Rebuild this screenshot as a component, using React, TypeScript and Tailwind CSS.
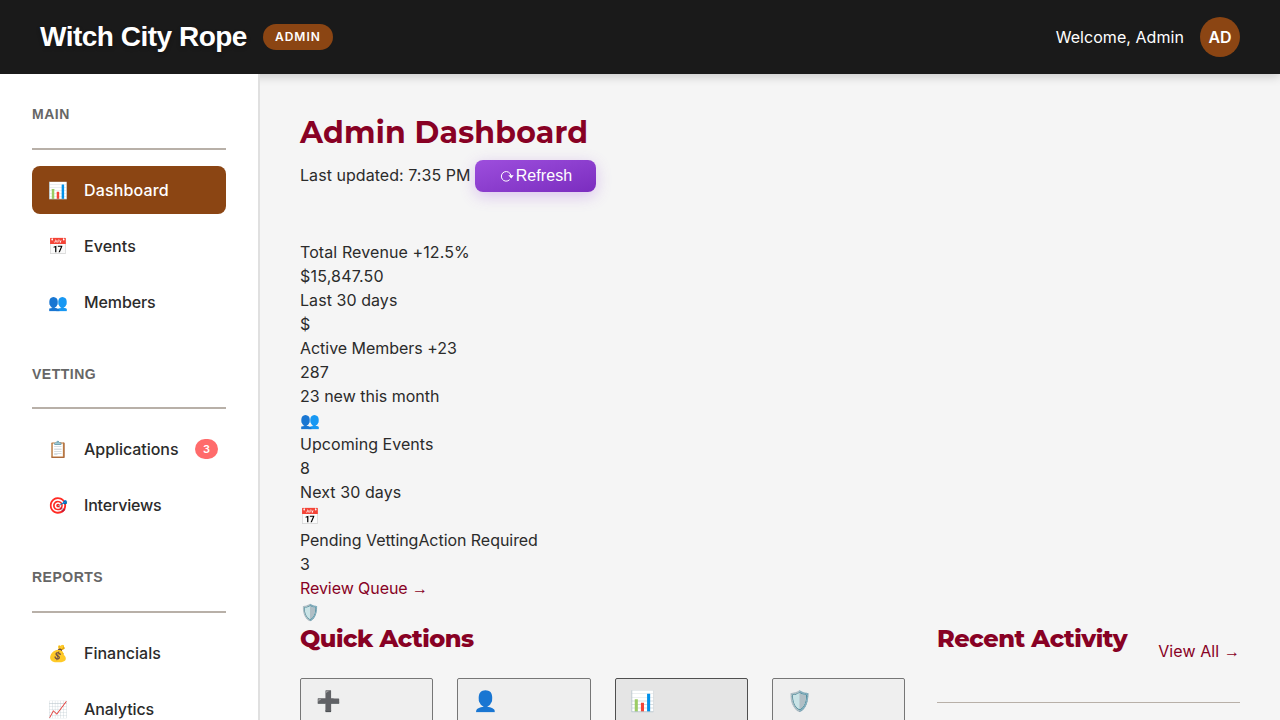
import type { ReactNode } from "react";

function Item({ icon, label, tracking = "", active, badge }: { icon: string; label: string; tracking?: string; active?: boolean; badge?: string }) {
  return (
    <a className={`mb-2 flex h-12 items-center rounded-lg pl-4 pr-2 text-[16px] font-medium ${active ? "bg-[#8b4513] text-white" : "text-[#2b2b2b]"}`}>
      <span className="w-9 shrink-0 text-[16px] leading-6">{icon}</span>
      <span className={tracking}>{label}</span>
      {badge && <span className="ml-auto flex h-5 w-[23px] items-center justify-center rounded-full bg-[#ff6b6b] text-[11px] font-semibold text-white">{badge}</span>}
    </a>
  );
}

function Section({ title, children }: { title: string; children: ReactNode }) {
  return (
    <section className="mb-10">
      <h3 className="mb-4 h-[43.6px] border-b-2 border-[#b8b0a8] font-['Liberation_Sans',sans-serif] text-[14px] font-bold leading-[17px] tracking-[0.5px] text-[#666]">{title}</h3>
      {children}
    </section>
  );
}

const Arrow = () => <span className="font-['Liberation_Sans',sans-serif] leading-none">→</span>;

const stats: { text: string; tracking?: string }[] = [
  { text: "Total Revenue +12.5%", tracking: "tracking-[0.1px]" },
  { text: "$15,847.50", tracking: "tracking-[0.2px]" },
  { text: "Last 30 days", tracking: "tracking-[0.06px]" },
  { text: "$" },
  { text: "Active Members +23", tracking: "tracking-[-0.03px]" },
  { text: "287" },
  { text: "23 new this month" },
  { text: "👥" },
  { text: "Upcoming Events", tracking: "tracking-[0.05px]" },
  { text: "8" },
  { text: "Next 30 days", tracking: "tracking-[0.08px]" },
  { text: "📅" },
  { text: "Pending VettingAction Required", tracking: "tracking-[-0.05px]" },
  { text: "3" },
];

const actions = ["➕", "👤", "📊", "🛡️"];

export default function App() {
  return (
    <div className="flex h-[720px] w-[1280px] flex-col overflow-hidden bg-[#f5f5f5] font-['Inter','Noto_Color_Emoji',sans-serif] text-[16px] leading-6 text-[#2b2b2b]">
      <header className="relative z-10 flex h-[74px] shrink-0 items-center justify-between bg-[#1a1a1a] px-10 text-white shadow-[0_2px_10px_rgba(0,0,0,0.2)]">
        <div className="flex items-center gap-4">
          <h1 className="font-['Liberation_Sans',sans-serif] text-[28px] font-bold tracking-[-0.5px] [text-shadow:0_2px_4px_rgba(0,0,0,0.3)]">Witch City Rope</h1>
          <span className="flex h-[26px] w-[70px] items-center justify-center rounded-full bg-[#8b4513] text-[12px] font-semibold tracking-[1px]">ADMIN</span>
        </div>
        <div className="flex items-center gap-4">
          <span className="tracking-[0.06px]">Welcome, Admin</span>
          <span className="flex h-10 w-10 items-center justify-center rounded-full bg-[#8b4513] font-semibold">AD</span>
        </div>
      </header>
      <div className="flex min-h-0 flex-1">
        <aside className="relative z-20 w-[260px] shrink-0 overflow-hidden border-r-2 border-[#e0e0e0] bg-white px-8 pt-8">
          <Section title="MAIN">
            <Item icon="📊" label="Dashboard" tracking="tracking-[0.16px]" active />
            <Item icon="📅" label="Events" tracking="tracking-[0.06px]" />
            <Item icon="👥" label="Members" tracking="tracking-[-0.1px]" />
          </Section>
          <Section title="VETTING">
            <Item icon="📋" label="Applications" badge="3" tracking="tracking-[-0.05px]" />
            <Item icon="🎯" label="Interviews" tracking="tracking-[-0.18px]" />
          </Section>
          <Section title="REPORTS">
            <Item icon="💰" label="Financials" />
            <Item icon="📈" label="Analytics" tracking="tracking-[-0.1px]" />
          </Section>
        </aside>
        <main className="min-w-0 flex-1 overflow-hidden px-10 pt-10">
          <h1 className="font-[Montserrat,'Open_Sans',sans-serif] text-[30px] font-bold leading-[38px] tracking-[0.2px] text-[#880124]">Admin Dashboard</h1>
          <div className="mt-2 flex h-8 items-center gap-[5px]">
            <span className="w-[170px] whitespace-nowrap pb-0.5 tracking-[0.05px]">Last updated: 7:35 PM</span>
            <button className="flex h-8 w-[121px] items-center justify-center rounded-lg bg-linear-to-br from-[#9d4edd] to-[#7b2cbf] pl-px font-['Liberation_Sans',sans-serif] text-white shadow-[0_4px_15px_rgba(157,78,221,0.3)]">
              <svg width="16" height="16" viewBox="0 0 16 16" fill="none" stroke="currentColor">
                <path d="M10.9 7.6A4.8 4.8 0 1 0 9.7 11.6" strokeWidth="1" />
                <path d="M8.3 7.3h5.4l-2.5 3.2z" fill="currentColor" stroke="none" />
              </svg>
              <span className="tracking-[0.1px]">Refresh</span>
            </button>
          </div>
          <div className="mt-12">
            {stats.map((s, i) => <div key={i} className={`h-6 ${s.tracking ?? ""}`}>{s.text}</div>)}
            <a className="block h-6 tracking-[-0.07px] text-[#880124]">Review Queue <Arrow /></a>
            <div className="h-6">🛡️</div>
          </div>
          <div className="flex gap-8">
            <section className="w-[605px] shrink-0">
              <h2 className="font-[Montserrat,sans-serif] text-[24px] font-extrabold leading-[30px] tracking-[-0.45px] text-[#880124]">Quick Actions</h2>
              <div className="mt-6 grid grid-cols-4 gap-6">
                {actions.map((x, i) => (
                  <div key={x} className={`h-24 rounded-[2px] border px-[15px] pt-[6px] text-[20px] leading-8 ${i === 2 ? "border-[#4f4f4f] bg-[#e5e5e5]" : "border-[#767676] bg-[#efefef]"}`}>{x}</div>
                ))}
              </div>
            </section>
            <section className="flex-1">
              <div className="flex h-[79px] items-start justify-between border-b border-[#b8b0a8]">
                <h2 className="font-[Montserrat,sans-serif] text-[24px] font-extrabold leading-[30px] tracking-[-0.43px] text-[#880124]">Recent Activity</h2>
                <a className="mt-[15px] tracking-[0.1px] text-[#880124]">View All <Arrow /></a>
              </div>
            </section>
          </div>
        </main>
      </div>
    </div>
  );
}
